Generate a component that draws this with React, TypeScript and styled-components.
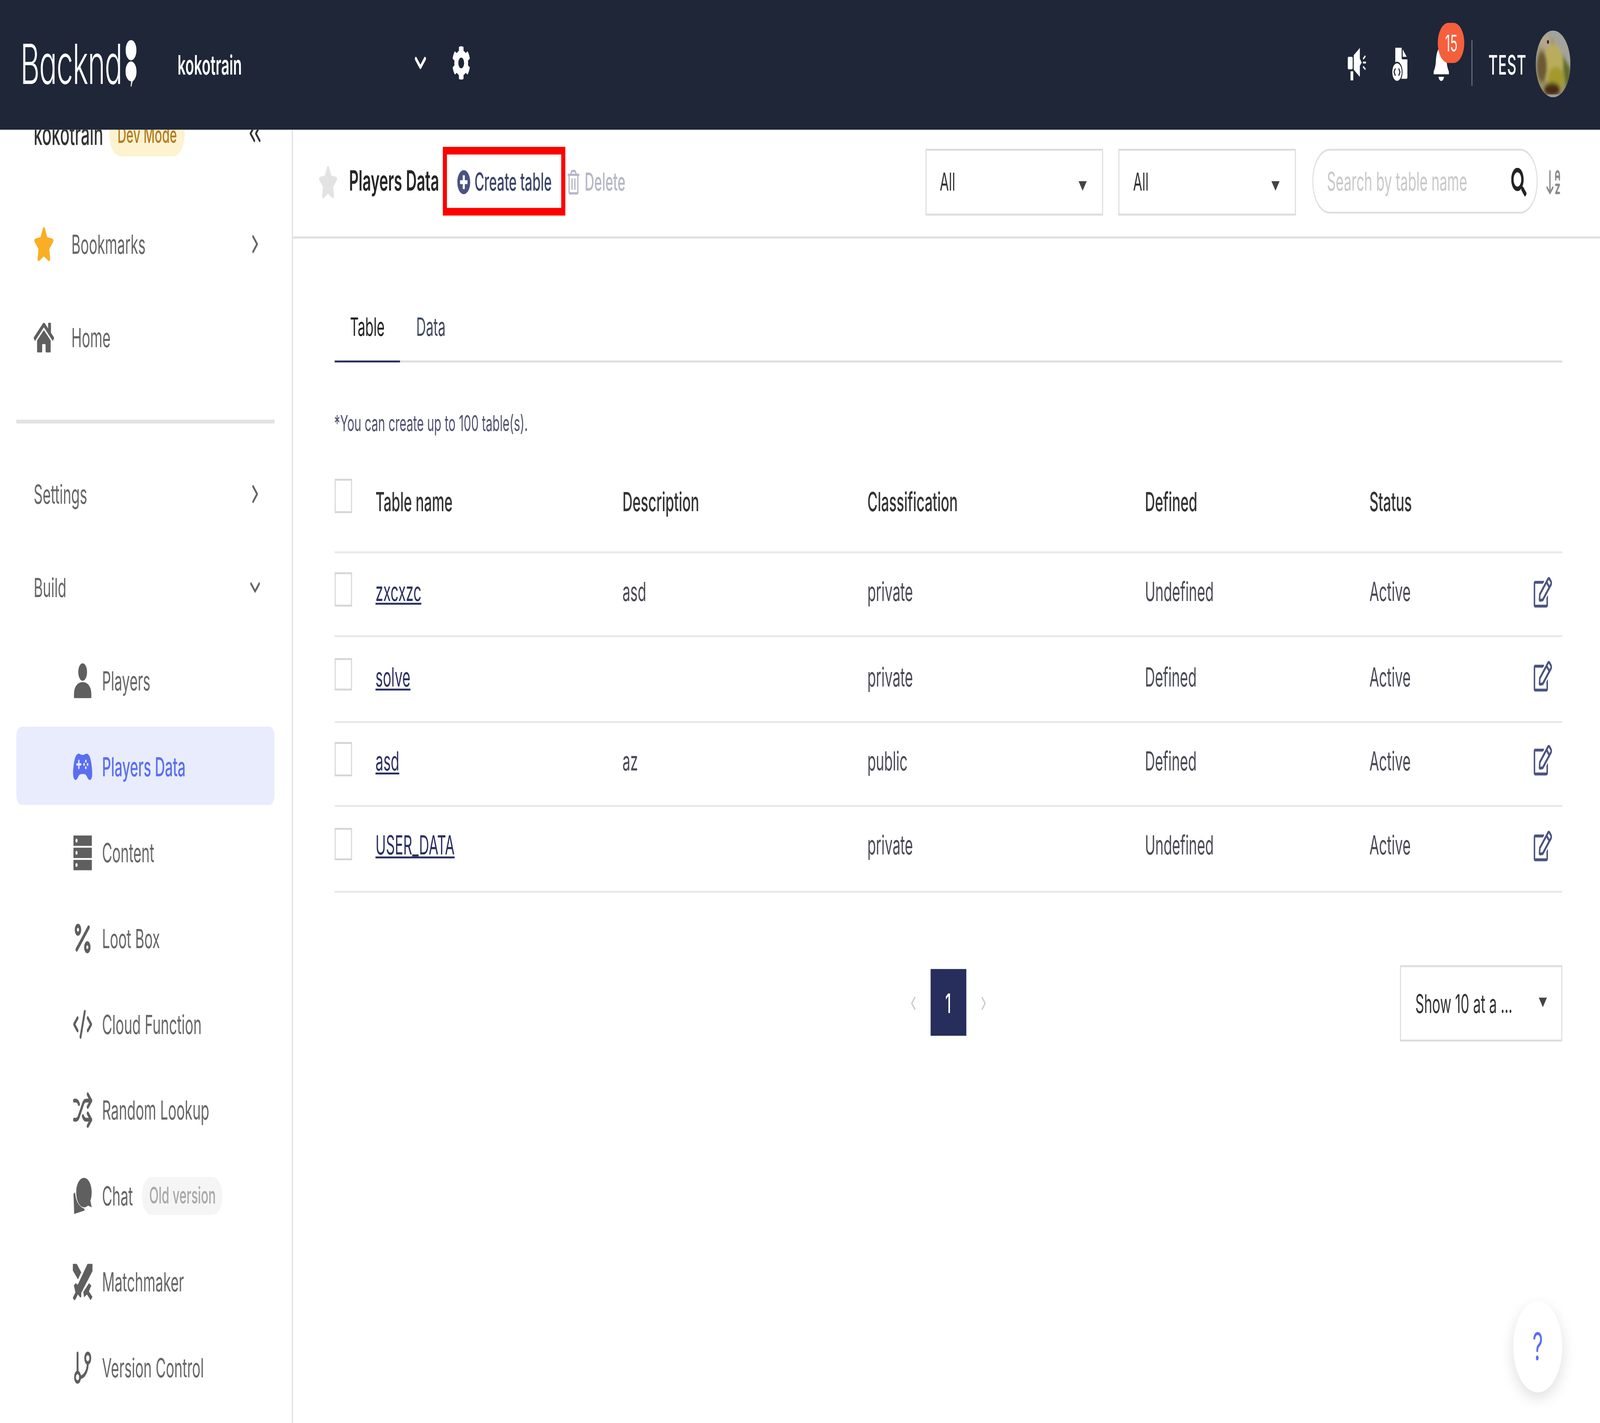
import React from "react";
import styled, { createGlobalStyle } from "styled-components";
import { FaStar, FaHome, FaCog, FaSearch, FaPlusCircle, FaRegTrashAlt, FaRegEdit } from "react-icons/fa";
import { IoGameController } from "react-icons/io5";
import { ChevronRight, ChevronDown, ChevronsLeft, Percent, CodeXml, Shuffle, GitBranch, ArrowDownAZ, ChevronLeft } from "lucide-react";

const DESIGN_WIDTH = 1568;
const DESIGN_HEIGHT = 746;

const GlobalStyle = createGlobalStyle`
  html { overflow: hidden; }
  html, body, #root { margin: 0; padding: 0; background: #fff; height: 100%; }
  * { box-sizing: border-box; }
`;

const Page = styled.div`
  transform-origin: 0 0;
  position: relative;
  width: ${DESIGN_WIDTH}px;
  height: ${DESIGN_HEIGHT}px;
  display: flex;
  flex-direction: column;
  overflow: hidden;
  background: #fff;
  font-family: Inter, "Liberation Sans", sans-serif;
  font-size: 14px;
  color: #333;
`;

/* ---------- header ---------- */
const Header = styled.header`
  flex: none;
  height: 68px;
  background: #1f2638;
  display: flex;
  align-items: center;
  padding: 0 29px 2px 20px;
  color: #fff;
  position: relative;
  z-index: 2;
`;
const Logo = styled.div`
  width: 154px;
  display: flex;
  align-items: flex-start;
  flex: none;
`;
const LogoText = styled.span`
  font-size: 29px;
  font-weight: 300;
  line-height: 30px;
  letter-spacing: -0.45px;
  font-feature-settings: "cv11" 1;
  margin-top: 1px;
`;
const LogoMark = styled.svg`
  width: 11px;
  height: 25px;
  margin-left: 3px;
  margin-top: 3px;
`;
const ProjectName = styled.span`
  width: 229px;
  flex: none;
  font-size: 14px;
  font-weight: 600;
`;
const HeaderChevron = styled(ChevronDown)`
  width: 18px;
  height: 18px;
  stroke-width: 2.6;
  flex: none;
`;
const Gear = styled(FaCog)`
  width: 18px;
  height: 18px;
  margin-left: 22px;
`;
const HeaderRight = styled.div`
  margin-left: auto;
  display: flex;
  align-items: center;
`;
const MegaphoneSvg = styled.svg`
  width: 19.7px;
  height: 19px;
`;
const FileSvg = styled.svg`
  width: 17.6px;
  height: 19px;
  margin-left: 22.6px;
`;
const BellWrap = styled.div`
  position: relative;
  display: flex;
  margin-left: 23.6px;
`;
const BellSvg = styled.svg`
  width: 16.9px;
  height: 19px;
`;
const Badge = styled.span`
  position: absolute;
  left: 5.6px;
  top: -11.5px;
  width: 26px;
  height: 21px;
  border-radius: 11px;
  background: #f55f3c;
  color: #fff;
  font-size: 12px;
  line-height: 21px;
  text-align: center;
`;
const HeaderDivider = styled.div`
  width: 1px;
  height: 24.5px;
  background: #6b7080;
  margin: 0 16px 0 21px;
`;
const UserName = styled.span`
  font-size: 14px;
  font-weight: 500;
  letter-spacing: 0.4px;
  margin-right: 9px;
`;
const AvatarSvg = styled.svg`
  width: 34px;
  height: 35px;
  border-radius: 50%;
  flex: none;
`;

/* ---------- body ---------- */
const Body = styled.div`
  flex: 1;
  min-height: 0;
  display: flex;
`;
const Sidebar = styled.aside`
  flex: none;
  width: 286.5px;
  border-right: 1px solid #ddd;
  overflow: hidden;
  color: #666;
  font-size: 13.7px;
`;
const SideInner = styled.div`
  margin-top: -18px;
  display: flex;
  flex-direction: column;
`;
const ProjectRow = styled.div`
  height: 40px;
  margin-bottom: 13.5px;
  padding: 0 27px 0 33px;
  display: flex;
  align-items: center;
  color: #333;
  font-size: 15.4px;
  font-weight: 500;
`;
const DevBadge = styled.span`
  margin-left: 6px;
  padding: 0 8px;
  height: 23px;
  border-radius: 12px;
  background: #fdf3d0;
  color: #b57a1f;
  font-size: 12px;
  font-weight: 500;
  line-height: 23px;
`;
const Collapse = styled(ChevronsLeft)`
  margin-left: auto;
  width: 18px;
  height: 18px;
  color: #333;
  stroke-width: 2;
`;
const TopRow = styled.div`
  height: 49px;
  margin: 0 16px;
  padding: 0 12px 0 17px;
  display: flex;
  align-items: center;
`;
const TopIcon = styled.span<{ $color?: string }>`
  width: 37px;
  flex: none;
  display: flex;
  color: ${(p) => p.$color || "#5f5f5f"};
  svg { width: 20px; height: 20px; }
`;
const RowChevron = styled(ChevronRight)`
  margin-left: auto;
  width: 16px;
  height: 16px;
  stroke-width: 2.2;
`;
const RowChevronDown = styled(ChevronDown)`
  margin-left: auto;
  width: 16px;
  height: 16px;
  stroke-width: 2.2;
`;
const SideDivider = styled.div`
  height: 1.5px;
  margin: 18.5px 17px 13px 16px;
  background: #e2e2e2;
`;
const SubList = styled.div`
  display: flex;
  flex-direction: column;
  gap: 4px;
  padding-top: 3.5px;
`;
const SubRow = styled.div<{ $active?: boolean }>`
  height: 41px;
  margin: 0 17px 0 16px;
  padding-left: 55px;
  display: flex;
  align-items: center;
  border-radius: 5px;
  background: ${(p) => (p.$active ? "#e8ecfd" : "transparent")};
  color: ${(p) => (p.$active ? "#5a6ff0" : "#666")};
  font-weight: ${(p) => (p.$active ? 500 : 400)};
`;
const SubIcon = styled.span`
  width: 20px;
  height: 20px;
  flex: none;
  margin-right: 9px;
  display: flex;
  align-items: center;
  justify-content: center;
  color: #5f5f5f;
  svg { width: 100%; height: 100%; }
`;
const ActiveIcon = styled(SubIcon)`
  color: #5a6ff0;
`;
const OldBadge = styled.span`
  margin-left: 9px;
  padding: 0 7px;
  height: 20px;
  border-radius: 10px;
  background: #f5f5f5;
  color: #a8a8a8;
  font-size: 12px;
  font-weight: 500;
  line-height: 20px;
`;

/* ---------- main ---------- */
const Main = styled.main`
  flex: 1;
  min-width: 0;
  display: flex;
  flex-direction: column;
`;
const Toolbar = styled.div`
  flex: none;
  height: 57px;
  border-bottom: 1px solid #ddd;
  display: flex;
  align-items: center;
  padding: 0 37px 2px 25.5px;
`;
const TitleStar = styled(FaStar)`
  width: 19px;
  height: 19px;
  color: #e3e3e3;
  flex: none;
`;
const Title = styled.span`
  margin-left: 11px;
  font-size: 14.6px;
  font-weight: 600;
  color: #262626;
  width: 92px;
  flex: none;
  white-space: nowrap;
`;
const CreateButton = styled.div`
  height: 36.5px;
  width: 120px;
  flex: none;
  border: 4px solid #ff0000;
  display: flex;
  align-items: center;
  padding-left: 10px;
  color: #3c4468;
  font-size: 13px;
  font-weight: 500;
  white-space: nowrap;
  svg { width: 13px; height: 13px; color: #4b5380; margin-right: 4px; flex: none; }
`;
const DeleteButton = styled.div`
  margin-left: 2px;
  display: flex;
  align-items: center;
  color: #b6b6c8;
  font-size: 13px;
  font-weight: 500;
  svg { width: 12px; height: 13px; margin-right: 5px; }
`;
const SelectBox = styled.div<{ $first?: boolean }>`
  width: 174px;
  height: 35px;
  flex: none;
  margin-left: ${(p) => (p.$first ? "auto" : "15.5px")};
  border: 1px solid #ddd;
  display: flex;
  align-items: center;
  padding: 0 15px 0 13px;
  justify-content: space-between;
  color: #333;
  font-size: 13px;
`;
const Caret = styled.span<{ $level?: boolean }>`
  width: 0;
  height: 0;
  margin-top: ${(p) => (p.$level ? "-1px" : "4px")};
  border-left: 4px solid transparent;
  border-right: 4px solid transparent;
  border-top: 5px solid #444;
`;
const SearchBox = styled.div`
  width: 220.6px;
  height: 34px;
  margin-left: 16px;
  flex: none;
  border: 1px solid #e0e0e0;
  border-radius: 17px;
  display: flex;
  align-items: center;
  padding: 0 10px 0 13px;
  justify-content: space-between;
  color: #c8c8c8;
  font-size: 13.4px;
  svg { width: 15px; height: 15px; color: #222; }
`;
const SortIcon = styled(ArrowDownAZ)`
  width: 17px;
  height: 17px;
  margin-left: 7px;
  color: #8a8a8a;
  stroke-width: 1.8;
  flex: none;
`;
const Content = styled.div`
  flex: 1;
  display: flex;
  flex-direction: column;
  padding: 21px 37px 0 41px;
`;
const Tabs = styled.div`
  display: flex;
  height: 44px;
  border-bottom: 1px solid #ddd;
  font-size: 13.2px;
`;
const Tab = styled.div<{ $active?: boolean }>`
  padding: 6px 15.5px 0;
  display: flex;
  align-items: center;
  margin-bottom: -1px;
  color: ${(p) => (p.$active ? "#222" : "#3f4a60")};
  border-bottom: 1.5px solid ${(p) => (p.$active ? "#2a3060" : "transparent")};
`;
const Note = styled.div`
  margin-top: 24px;
  font-size: 11.6px;
  line-height: 16px;
  color: #4d5270;
`;
const TableGrid = styled.div`
  margin-top: 15px;
  display: flex;
  flex-direction: column;
  font-size: 13.7px;
`;
const rowColumns = "40.5px 242px 240px 272px 220px 1fr 28px";
const HeadRow = styled.div`
  display: grid;
  grid-template-columns: ${rowColumns};
  height: 45px;
  padding-bottom: 9px;
  align-items: center;
  border-bottom: 1px solid #e8e8e8;
  color: #333;
  font-weight: 500;
`;
const DataRow = styled.div`
  display: grid;
  grid-template-columns: ${rowColumns};
  height: 44.4px;
  padding-bottom: 3px;
  align-items: center;
  border-bottom: 1px solid #e8e8e8;
  color: #4a4a55;
`;
const Check = styled.span<{ $head?: boolean }>`
  display: block;
  width: 17.5px;
  height: 17.5px;
  margin-top: ${(p) => (p.$head ? "-5px" : "-2px")};
  border: 1px solid #d6d6d6;
  background: #fff;
`;
const NameLink = styled.a`
  color: #2a3060;
  text-decoration: underline;
`;
const EditIcon = styled(FaRegEdit)`
  width: 18px;
  height: 17px;
  color: #4b5380;
  justify-self: end;
  margin-right: 10px;
`;
const PagerRow = styled.div`
  margin-top: 38px;
  display: grid;
  grid-template-columns: 1fr auto 1fr;
  align-items: center;
`;
const Pager = styled.div`
  grid-column: 2;
  display: flex;
  align-items: center;
  color: #c8c8c8;
  svg { width: 12px; height: 12px; stroke-width: 2; }
`;
const PageNumber = styled.span`
  width: 35px;
  height: 34.5px;
  margin: 0 11px;
  background: #272e5c;
  color: #fff;
  font-weight: 500;
  display: flex;
  align-items: center;
  justify-content: center;
`;
const SizeSelect = styled.div`
  justify-self: end;
  width: 159px;
  height: 40px;
  border: 1px solid #ddd;
  display: flex;
  align-items: center;
  justify-content: space-between;
  padding: 0 14px;
  color: #333;
  font-size: 13.4px;
`;
const HelpButton = styled.div`
  position: absolute;
  right: 37px;
  bottom: 16px;
  width: 48px;
  height: 48px;
  border-radius: 50%;
  background: #fff;
  box-shadow: 0 3px 10px rgba(0, 0, 0, 0.13);
  color: #5a6ff0;
  font-size: 20px;
  display: flex;
  align-items: center;
  justify-content: center;
`;

/* ---------- drawings ---------- */
const Megaphone = () => (
  <MegaphoneSvg viewBox="60 50 280 270" fill="#fff">
    <rect x="72" y="132" width="68" height="93" rx="12" />
    <path d="M155 120 L240 66 V145 L265 175 L240 200 V282 L155 228Z" />
    <rect x="110" y="240" width="38" height="68" />
    <path d="M285 148 L318 126 M282 175 H325 M285 205 L318 226" stroke="#fff" strokeWidth="14" fill="none" />
  </MegaphoneSvg>
);
const FileIcon = () => (
  <FileSvg viewBox="660 50 250 280">
    <path fill="#fff" d="M720 65 H812 V140 Q812 155 827 155 H895 V290 Q895 305 880 305 H720Z" />
    <path fill="#fff" d="M827 78 L885 135 H827Z" />
    <circle cx="745" cy="253" r="80" fill="#1f2638" />
    <circle cx="745" cy="253" r="68" fill="#fff" />
    <path d="M722 225 L702 253 L722 281 M768 225 L788 253 L768 281" stroke="#1f2638" strokeWidth="14" fill="none" />
  </FileSvg>
);
const Bell = () => (
  <BellSvg viewBox="1245 50 240 280" fill="#fff">
    <path d="M1365 58 C1305 68 1292 125 1287 170 C1282 215 1266 232 1255 250 V270 H1475 V250 C1464 232 1448 215 1443 170 C1438 125 1425 68 1365 58Z" />
    <path d="M1325 290 H1405 C1400 312 1380 322 1365 322 C1350 322 1330 312 1325 290Z" />
  </BellSvg>
);
const Avatar = () => (
  <AvatarSvg viewBox="0 0 34 35">
    <defs>
      <filter id="soft"><feGaussianBlur stdDeviation="1.2" /></filter>
    </defs>
    <rect width="34" height="35" fill="#a3a29c" />
    <g filter="url(#soft)">
      <path d="M2 12 C6 3 13 2 17 5 C23 13 29 20 34 24 L28 36 H6 L0 26Z" fill="#9b8f62" />
      <path d="M24 11 L34 20 V30 L30 30Z" fill="#5f6a2c" />
      <ellipse cx="17" cy="18" rx="10" ry="11" fill="#b9ad5c" />
      <ellipse cx="20" cy="25" rx="8" ry="6" fill="#a39a2e" />
      <ellipse cx="6" cy="19" rx="5" ry="8" fill="#6d5a36" />
      <ellipse cx="9" cy="6" rx="6" ry="4" fill="#b3a68c" />
      <ellipse cx="16" cy="31" rx="8" ry="3.6" fill="#4a2a12" />
    </g>
    <circle cx="12" cy="6" r="1" fill="#332a20" />
    <rect y="33.5" width="34" height="1.5" fill="#9a9a96" />
  </AvatarSvg>
);
const PersonIcon = () => (
  <svg viewBox="0 0 20 20" fill="currentColor">
    <ellipse cx="10" cy="5.3" rx="4.3" ry="4.6" />
    <path d="M1.5 19 V17 C1.5 13 5 10.6 10 10.6 C15 10.6 18.5 13 18.5 17 V19Z" />
  </svg>
);
const ServerIcon = () => (
  <svg viewBox="0 0 20 20">
    <path fill="currentColor" d="M1 1 H19 V6.4 H1Z M1 7.4 H19 V12.8 H1Z M1 13.8 H19 V19.2 H1Z" />
    <circle cx="4" cy="3.7" r="1" fill="#fff" />
    <circle cx="4" cy="10.1" r="1" fill="#fff" />
    <circle cx="4" cy="16.5" r="1" fill="#fff" />
  </svg>
);
const ChatIcon = () => (
  <svg viewBox="70 45 280 285" fill="currentColor">
    <path d="M228 52 C290 52 336 100 336 160 C336 185 330 205 318 222 L336 272 L285 258 C268 268 248 272 228 272 C168 272 120 222 120 160 C120 100 168 52 228 52Z" />
    <path d="M82 172 L104 160 C112 222 160 270 235 282 V296 L92 322Z" />
  </svg>
);
const SwordsIcon = () => (
  <svg viewBox="80 715 260 255" fill="currentColor">
    <path d="M85 720 H135 L192 778 L150 826 L85 765Z" />
    <path d="M272 720 H335 V770 L192 918 V945 L180 950 L150 928 L118 962 L100 968 L85 950 L118 915 L98 868 L120 852 L148 862Z" />
    <path d="M218 912 L290 852 L320 868 L290 908 L335 945 L312 968 L265 928 L228 948Z" />
  </svg>
);

const subs = [
  { label: "Content", icon: <ServerIcon /> },
  { label: "Loot Box", icon: <Percent strokeWidth={2.6} /> },
  { label: "Cloud Function", icon: <CodeXml strokeWidth={2.2} /> },
  { label: "Random Lookup", icon: <Shuffle strokeWidth={2.4} /> },
];

const rows = [
  { name: "zxcxzc", desc: "asd", cls: "private", def: "Undefined" },
  { name: "solve", desc: "", cls: "private", def: "Defined" },
  { name: "asd", desc: "az", cls: "public", def: "Defined" },
  { name: "USER_DATA", desc: "", cls: "private", def: "Undefined" },
];

export default function App() {
  const fit = `scale(${window.innerWidth / DESIGN_WIDTH}, ${window.innerHeight / DESIGN_HEIGHT})`;
  return (
    <Page style={{ transform: fit }}>
      <GlobalStyle />
      <Header>
        <Logo>
          <LogoText>Backnd</LogoText>
          <LogoMark viewBox="0 0 11 25" fill="#fff">
            <circle cx="5.4" cy="5.3" r="5.3" />
            <path d="M5.4 11.2 C8.4 11.2 10.8 13.6 10.8 16.5 C10.8 19 9 21 7 21.6 L5.6 24.6 L5 24.2 L5.6 21.7 C2.5 21.5 0 19.3 0 16.5 C0 13.6 2.4 11.2 5.4 11.2Z" />
          </LogoMark>
        </Logo>
        <ProjectName>kokotrain</ProjectName>
        <HeaderChevron />
        <Gear />
        <HeaderRight>
          <Megaphone />
          <FileIcon />
          <BellWrap>
            <Bell />
            <Badge>15</Badge>
          </BellWrap>
          <HeaderDivider />
          <UserName>TEST</UserName>
          <Avatar />
        </HeaderRight>
      </Header>
      <Body>
        <Sidebar>
          <SideInner>
            <ProjectRow>
              kokotrain
              <DevBadge>Dev Mode</DevBadge>
              <Collapse />
            </ProjectRow>
            <TopRow>
              <TopIcon $color="#f9ae25"><FaStar /></TopIcon>
              Bookmarks
              <RowChevron />
            </TopRow>
            <TopRow>
              <TopIcon><FaHome /></TopIcon>
              Home
            </TopRow>
            <SideDivider />
            <TopRow>
              Settings
              <RowChevron />
            </TopRow>
            <TopRow>
              Build
              <RowChevronDown />
            </TopRow>
            <SubList>
              <SubRow>
                <SubIcon><PersonIcon /></SubIcon>
                Players
              </SubRow>
              <SubRow $active>
                <ActiveIcon><IoGameController /></ActiveIcon>
                Players Data
              </SubRow>
              {subs.map((s) => (
                <SubRow key={s.label}>
                  <SubIcon>{s.icon}</SubIcon>
                  {s.label}
                </SubRow>
              ))}
              <SubRow>
                <SubIcon><ChatIcon /></SubIcon>
                Chat
                <OldBadge>Old version</OldBadge>
              </SubRow>
              <SubRow>
                <SubIcon><SwordsIcon /></SubIcon>
                Matchmaker
              </SubRow>
              <SubRow>
                <SubIcon><GitBranch strokeWidth={2.2} /></SubIcon>
                Version Control
              </SubRow>
            </SubList>
          </SideInner>
        </Sidebar>
        <Main>
          <Toolbar>
            <TitleStar />
            <Title>Players Data</Title>
            <CreateButton>
              <FaPlusCircle />
              Create table
            </CreateButton>
            <DeleteButton>
              <FaRegTrashAlt />
              Delete
            </DeleteButton>
            <SelectBox $first>
              All
              <Caret />
            </SelectBox>
            <SelectBox>
              All
              <Caret />
            </SelectBox>
            <SearchBox>
              Search by table name
              <FaSearch />
            </SearchBox>
            <SortIcon />
          </Toolbar>
          <Content>
            <Tabs>
              <Tab $active>Table</Tab>
              <Tab>Data</Tab>
            </Tabs>
            <Note>*You can create up to 100 table(s).</Note>
            <TableGrid>
              <HeadRow>
                <Check $head />
                <span>Table name</span>
                <span>Description</span>
                <span>Classification</span>
                <span>Defined</span>
                <span>Status</span>
              </HeadRow>
              {rows.map((r) => (
                <DataRow key={r.name}>
                  <Check />
                  <NameLink>{r.name}</NameLink>
                  <span>{r.desc}</span>
                  <span>{r.cls}</span>
                  <span>{r.def}</span>
                  <span>Active</span>
                  <EditIcon />
                </DataRow>
              ))}
            </TableGrid>
            <PagerRow>
              <Pager>
                <ChevronLeft />
                <PageNumber>1</PageNumber>
                <ChevronRight />
              </Pager>
              <SizeSelect>
                Show 10 at a ...
                <Caret $level />
              </SizeSelect>
            </PagerRow>
          </Content>
        </Main>
      </Body>
      <HelpButton>?</HelpButton>
    </Page>
  );
}
